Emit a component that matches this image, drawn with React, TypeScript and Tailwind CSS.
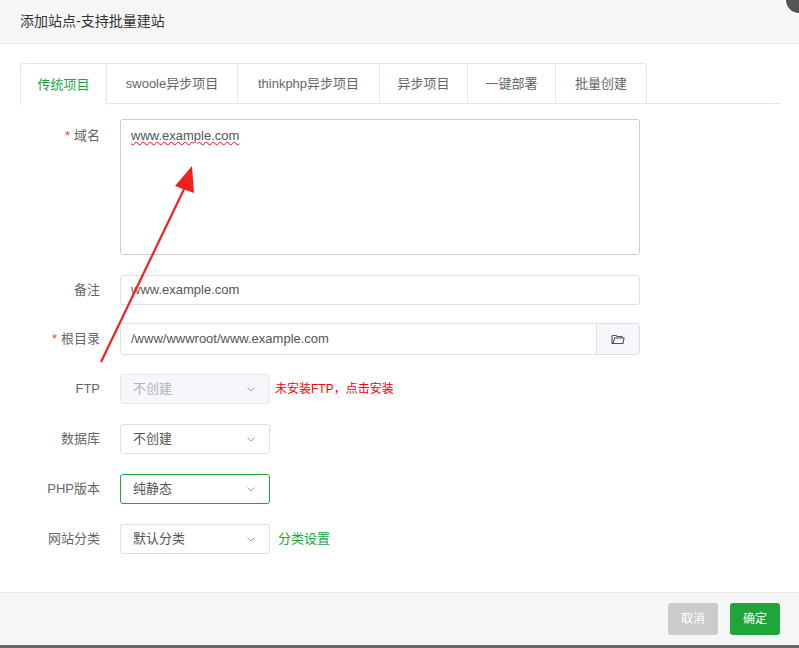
import React from "react";

const font = { fontFamily: '"Liberation Sans", "Noto Sans CJK SC", sans-serif' };

function Chevron() {
  return (
    <svg width="12" height="12" viewBox="0 0 12 12" className="text-gray-400">
      <path d="M2.5 4.5 L6 8 L9.5 4.5" fill="none" stroke="currentColor" strokeWidth="1" />
    </svg>
  );
}

function Select({ value, disabled, active }: { value: string; disabled?: boolean; active?: boolean }) {
  return (
    <div
      className={
        "w-[150px] h-[30px] rounded-[3px] border flex items-center justify-between pl-3 pr-3 text-[13px] " +
        (disabled
          ? "bg-[#f5f7fa] border-[#e4e7ed] text-[#b0b3b8]"
          : active
          ? "bg-white border-[#20a53a] text-[#555]"
          : "bg-white border-[#dcdfe6] text-[#555]")
      }
    >
      <span>{value}</span>
      <Chevron />
    </div>
  );
}

function Row({ label, req, children }: { label: string; req?: boolean; children: React.ReactNode }) {
  return (
    <div className="flex items-center">
      <div className="w-[100px] text-right text-[13px] text-[#666] pr-0">
        {req && <span className="text-[#f04040] mr-1">*</span>}
        {label}
      </div>
      <div className="ml-5 flex items-center">{children}</div>
    </div>
  );
}

export default function App() {
  const tabs = ["传统项目", "swoole异步项目", "thinkphp异步项目", "异步项目", "一键部署", "批量创建"];
  const widths = ["w-[87px]", "w-[131px]", "w-[142px]", "w-[88px]", "w-[88px]", "w-[91px]"];
  return (
    <div className="relative w-[799px] h-[648px] bg-white overflow-hidden flex flex-col" style={font}>
      <div className="h-[44px] bg-[#f6f6f6] border-b border-[#e8e8e8] flex items-center pl-5 text-[14px] text-[#333] shrink-0">
        添加站点-支持批量建站
      </div>
      <div className="absolute -right-[15px] -top-[15px] w-[30px] h-[30px] rounded-full bg-[#555] border-2 border-white" />

      <div className="flex-1 pt-[19px]">
        <div className="ml-5 mr-[19px] flex border-b border-[#e4e7ed] h-[41px]">
          {tabs.map((t, i) => (
            <div
              key={t}
              className={
                widths[i] +
                " h-[41px] flex items-center justify-center text-[13px] border-t border-r border-[#e4e7ed] " +
                (i === 0 ? "border-l bg-white text-[#20a53a] h-[42px] rounded-tl-[3px]" : "text-[#666]") +
                (i === 5 ? " rounded-tr-[3px]" : "")
              }
            >
              {t}
            </div>
          ))}
        </div>

        <div className="flex flex-col mt-[15px]">
          <div className="flex items-start">
            <div className="w-[100px] text-right text-[13px] text-[#666] pt-[7px]">
              <span className="text-[#f04040] mr-1">*</span>域名
            </div>
            <div className="ml-5 w-[520px] h-[136px] border border-[#c8ccd4] rounded-[3px] px-[10px] py-[6px] text-[13px] text-[#555]">
              <span className="underline decoration-wavy decoration-[#f00] decoration-1">www.example.com</span>
            </div>
          </div>

          <div className="mt-[20px]">
            <Row label="备注">
              <div className="w-[520px] h-[30px] border border-[#dcdfe6] rounded-[3px] px-[10px] flex items-center text-[13px] text-[#555]">
                www.example.com
              </div>
            </Row>
          </div>

          <div className="mt-[18px]">
            <Row label="根目录" req>
              <div className="w-[520px] h-[32px] border border-[#dcdfe6] rounded-[3px] flex items-center text-[13px] text-[#555]">
                <div className="flex-1 px-[10px]">/www/wwwroot/www.example.com</div>
                <div className="w-[43px] h-full bg-[#f5f7fa] border-l border-[#dcdfe6] flex items-center justify-center">
                  <svg width="14" height="12" viewBox="0 0 14 12" fill="none" stroke="#555" strokeWidth="1.1">
                    <path d="M1 2.5 V10.5 H12 L13 5 H3.5 L2 10.5 M1 2.5 H5 L6 3.5 H11 V5" />
                  </svg>
                </div>
              </div>
            </Row>
          </div>

          <div className="mt-[19px]">
            <Row label="FTP">
              <Select value="不创建" disabled />
              <span className="ml-[5px] text-[12px] text-[#f00]">未安装FTP，点击安装</span>
            </Row>
          </div>
          <div className="mt-[20px]">
            <Row label="数据库">
              <Select value="不创建" />
            </Row>
          </div>
          <div className="mt-[20px]">
            <Row label="PHP版本">
              <Select value="纯静态" active />
            </Row>
          </div>
          <div className="mt-[20px]">
            <Row label="网站分类">
              <Select value="默认分类" />
              <span className="ml-[8px] text-[13px] text-[#20a53a]">分类设置</span>
            </Row>
          </div>
        </div>
      </div>

      <div className="h-[53px] bg-[#f5f6f6] border-t border-[#e8e8e8] flex items-center justify-end pr-[19px] gap-3 shrink-0">
        <div className="w-[50px] h-[32px] rounded-[3px] bg-[#cbcbcb] text-white text-[12px] flex items-center justify-center">取消</div>
        <div className="w-[50px] h-[32px] rounded-[3px] bg-[#20a53a] text-white text-[12px] flex items-center justify-center">确定</div>
      </div>
      <div className="h-[3px] bg-[#666] shrink-0" />

      <svg className="absolute left-0 top-0 pointer-events-none" width="799" height="648">
        <line x1="101" y1="362" x2="186" y2="185" stroke="#f02020" strokeWidth="2.2" />
        <polygon points="192,166 175,186 194,193" fill="#f02020" />
      </svg>
    </div>
  );
}
